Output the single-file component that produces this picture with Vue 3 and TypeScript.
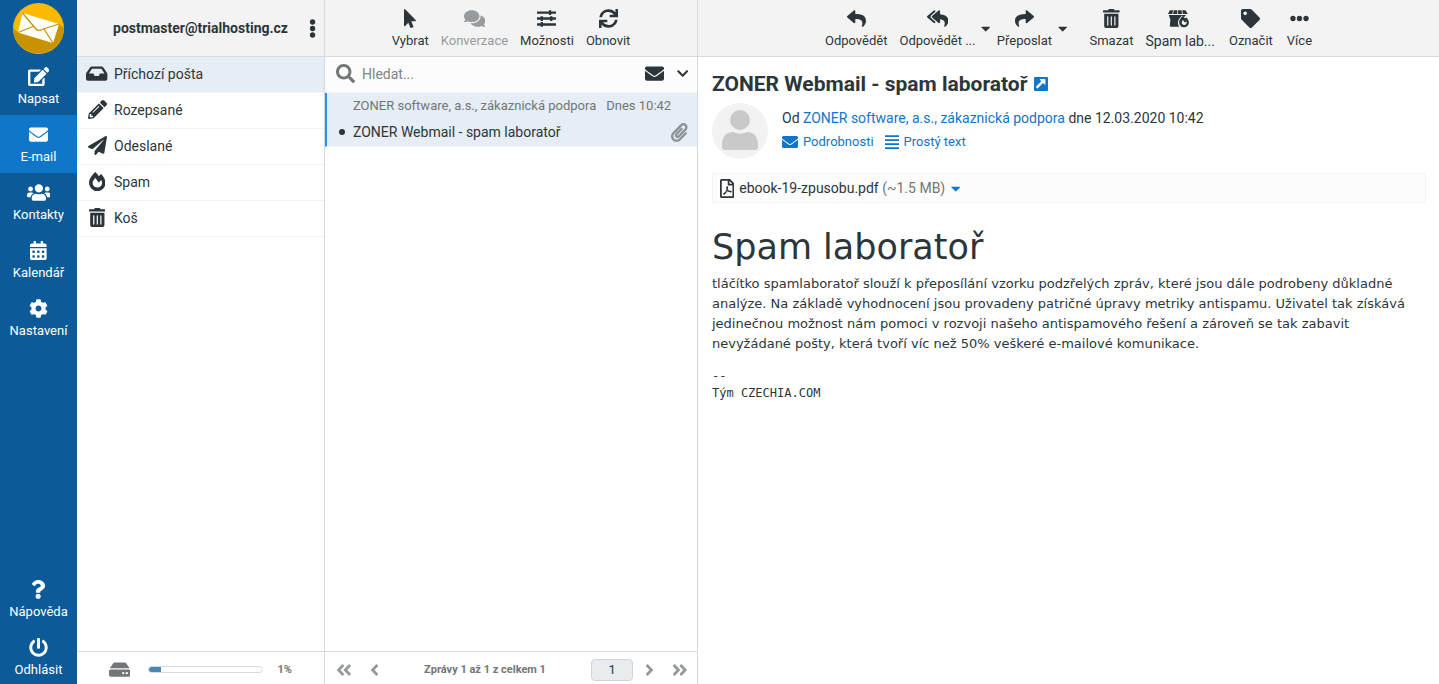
<script setup lang="ts">
import { h, ref } from 'vue'

interface Glyph { w: number; d: string }

const dot = (x: number, y: number, r: number) => `M${x - r} ${y}a${r} ${r} 0 1 0 ${2 * r} 0a${r} ${r} 0 1 0 ${-2 * r} 0z`
const cell = (x: number, y: number) => `M${x} ${y}c0-6.600 5.400-12 12-12h40c6.600 0 12 5.400 12 12v40c0 6.600-5.400 12-12 12h-40c-6.600 0-12-5.400-12-12z`
const angleLeft = (x: number) => `M${x} 239l136-136c9.400-9.400 24.600-9.400 33.900 0l22.600 22.600c9.400 9.400 9.400 24.600 0 33.900L${x + 96.2} 256l96.400 96.400c9.400 9.400 9.400 24.600 0 33.900L${x + 170} 409c-9.400 9.400-24.600 9.400-33.900 0l-136-136c-9.500-9.400-9.500-24.600-.1-34z`
const angleRight = (x: number) => `M${x} 273l-136 136c-9.400 9.400-24.600 9.400-33.900 0l-22.600-22.600c-9.400-9.400-9.400-24.600 0-33.900L${x - 96.2} 256l-96.400-96.400c-9.400-9.400-9.400-24.600 0-33.900L${x - 170} 103c9.400-9.400 24.600-9.400 33.900 0l136 136c9.500 9.400 9.500 24.600.1 34z`

const glyphs: Record<string, Glyph> = {
  edit: { w: 576, d: 'M402.600 83.200l90.200 90.200c3.800 3.800 3.800 10 0 13.800L274.400 405.600l-92.800 10.300c-12.400 1.400-22.900-9.100-21.500-21.500l10.300-92.800L388.800 83.200c3.800-3.800 10-3.800 13.800 0zm162-22.900l-48.800-48.800c-15.200-15.200-39.900-15.200-55.200 0l-35.400 35.400c-3.800 3.800-3.800 10 0 13.800l90.200 90.200c3.800 3.800 10 3.800 13.800 0l35.400-35.400c15.200-15.300 15.200-40 0-55.200zM384 346.200V448H64V128h229.800c3.200 0 6.200-1.300 8.500-3.500l40-40c7.600-7.600 2.200-20.500-8.500-20.500H48C21.500 64 0 85.500 0 112v352c0 26.500 21.500 48 48 48h352c26.500 0 48-21.500 48-48V306.200c0-10.700-12.900-16-20.500-8.500l-40 40c-2.200 2.300-3.500 5.300-3.500 8.500z' },
  envelope: { w: 512, d: 'M502.300 190.800c3.900-3.100 9.700-.2 9.700 4.700V400c0 26.500-21.500 48-48 48H48c-26.500 0-48-21.500-48-48V195.600c0-5 5.700-7.800 9.700-4.700 22.400 17.400 52.100 39.500 154.100 113.600 21.100 15.400 56.700 47.800 92.200 47.600 35.700.3 72-32.800 92.300-47.600 102-74.100 131.600-96.300 154-113.700zM256 320c23.200.4 56.600-29.200 73.400-41.400 132.700-96.300 142.800-104.700 173.400-128.700 5.800-4.500 9.200-11.500 9.200-18.900v-19c0-26.500-21.500-48-48-48H48c-26.500 0-48 21.500-48 48v19c0 7.400 3.400 14.300 9.200 18.900 30.600 23.900 40.700 32.400 173.400 128.700 16.800 12.200 50.200 41.800 73.400 41.400z' },
  users: { w: 640, d: 'M96 224c35.300 0 64-28.700 64-64s-28.700-64-64-64-64 28.700-64 64 28.700 64 64 64zm448 0c35.300 0 64-28.700 64-64s-28.700-64-64-64-64 28.700-64 64 28.700 64 64 64zm32 32h-64c-17.600 0-33.500 7.100-45.100 18.600 40.300 22.100 68.900 62 75.100 109.400h66c17.700 0 32-14.300 32-32v-32c0-35.300-28.700-64-64-64zm-256 0c61.900 0 112-50.100 112-112S381.900 32 320 32 208 82.100 208 144s50.100 112 112 112zm76.800 32h-8.300c-20.800 10-43.900 16-68.500 16s-47.600-6-68.500-16h-8.300C179.600 288 128 339.600 128 403.200V432c0 26.500 21.500 48 48 48h288c26.500 0 48-21.500 48-48v-28.800c0-63.600-51.600-115.200-115.200-115.200zm-223.700-13.400C161.500 263.100 145.600 256 128 256H64c-35.300 0-64 28.700-64 64v32c0 17.700 14.300 32 32 32h65.900c6.300-47.400 34.900-87.300 75.200-109.400z' },
  calendar: { w: 448, d: 'M0 464c0 26.500 21.500 48 48 48h352c26.500 0 48-21.500 48-48V192H0z' + [268, 396].map(y => [64, 192, 320].map(x => cell(x, y)).join('')).join('') + 'M400 64h-48V16c0-8.800-7.200-16-16-16h-32c-8.800 0-16 7.200-16 16v48H160V16c0-8.800-7.200-16-16-16h-32c-8.800 0-16 7.200-16 16v48H48C21.500 64 0 85.500 0 112v48h448v-48c0-26.500-21.500-48-48-48z' },
  cog: { w: 512, d: 'M487.400 315.700l-42.600-24.600c4.300-23.200 4.300-47 0-70.200l42.600-24.600c4.900-2.800 7.100-8.600 5.500-14-11.100-35.600-30-67.800-54.700-94.600-3.800-4.100-10-5.100-14.800-2.300L380.800 110c-17.900-15.400-38.500-27.300-60.800-35.100V25.800c0-5.600-3.900-10.500-9.400-11.700-36.700-8.200-74.300-7.800-109.200 0-5.500 1.200-9.400 6.100-9.400 11.700V75c-22.200 7.900-42.800 19.800-60.800 35.100L88.700 85.500c-4.900-2.800-11-1.900-14.800 2.300-24.700 26.700-43.600 58.900-54.700 94.600-1.700 5.400.6 11.200 5.500 14L67.300 221c-4.300 23.200-4.300 47 0 70.200l-42.600 24.600c-4.900 2.800-7.100 8.600-5.500 14 11.100 35.600 30 67.800 54.700 94.600 3.800 4.100 10 5.100 14.800 2.300l42.600-24.600c17.900 15.400 38.500 27.300 60.800 35.100v49.200c0 5.600 3.900 10.500 9.400 11.700 36.700 8.200 74.300 7.800 109.200 0 5.500-1.200 9.400-6.100 9.400-11.700v-49.200c22.200-7.900 42.800-19.800 60.800-35.100l42.600 24.600c4.900 2.800 11 1.900 14.800-2.300 24.700-26.700 43.600-58.900 54.700-94.600 1.500-5.500-.7-11.300-5.600-14.100zM256 336c-44.100 0-80-35.900-80-80s35.900-80 80-80 80 35.900 80 80-35.900 80-80 80z' },
  question: { w: 384, d: 'M202 0C122.200 0 70.500 32.700 29.900 91c-7.400 10.600-5.100 25.100 5.200 32.900l43.100 32.700c10.400 7.900 25.100 6 33.300-4.100 25-31.400 43.600-49.500 82.700-49.500 30.800 0 68.800 19.800 68.800 49.600 0 22.600-18.600 34.200-49 51.200-35.400 19.900-82.300 44.600-82.300 106.400V320c0 13.300 10.700 24 24 24h72.500c13.300 0 24-10.700 24-24v-5.800c0-42.900 125.300-44.600 125.300-160.600C377.500 66.300 286.900 0 202 0zM192 373.500c-38.200 0-69.300 31-69.300 69.200S153.800 512 192 512s69.300-31.100 69.300-69.300-31.100-69.200-69.300-69.200z' },
  power: { w: 512, d: 'M400 54.100c63 45 104 118.600 104 201.900 0 136.800-110.800 247.700-247.500 248C120 504.300 8.200 393 8 256.400 7.900 173.100 48.900 99.300 111.800 54.200c11.700-8.300 28-4.800 35 7.700L162.600 90c5.900 10.500 3.100 23.800-6.600 31-41.500 30.800-68 79.600-68 134.900-.1 92.300 74.500 168.100 168 168.100 91.600 0 168.600-74.200 168-169.100-.3-51.800-24.700-101.800-68.100-134-9.700-7.200-12.400-20.500-6.500-30.900l15.800-28.100c7-12.400 23.200-16.100 34.800-7.800zM296 264V24c0-13.300-10.700-24-24-24h-32c-13.300 0-24 10.700-24 24v240c0 13.300 10.700 24 24 24h32c13.300 0 24-10.700 24-24z' },
  inbox: { w: 576, d: 'M567.900 243.900L462.300 85.400A48 48 0 0 0 422.300 64H153.700a48 48 0 0 0-39.900 21.400L8.100 243.900A48 48 0 0 0 0 270.500V400c0 26.500 21.500 48 48 48h480c26.500 0 48-21.500 48-48V270.500a48 48 0 0 0-8.100-26.600zM162.300 128h251.400l85.400 128H376l-32 64H232l-32-64H76.900z' },
  pencil: { w: 512, d: 'M497.900 142.100l-46.100 46.100c-4.700 4.700-12.300 4.700-17 0l-111-111c-4.700-4.700-4.700-12.300 0-17l46.100-46.100c18.700-18.700 49.100-18.700 67.900 0l60.100 60.100c18.800 18.700 18.800 49.100 0 67.900zM284.200 99.800L21.600 362.400.4 483.900c-2.900 16.400 11.400 30.600 27.800 27.800l121.500-21.300 262.600-262.600c4.700-4.700 4.700-12.300 0-17l-111-111c-4.800-4.700-12.400-4.700-17.100 0zM124.100 339.900c-5.500-5.500-5.500-14.300 0-19.800l154-154c5.500-5.500 14.300-5.500 19.800 0s5.500 14.300 0 19.800l-154 154c-5.500 5.500-14.300 5.500-19.800 0zM88 424h48v36.300l-64.500 11.300-31.100-31.100L51.700 376H88z' },
  plane: { w: 512, d: 'M476 3.200L12.500 270.600c-18.100 10.400-15.800 35.600 2.200 43.200L121 358.400l287.300-253.200c5.500-4.900 13.300 2.600 8.600 8.300L176 407v80.500c0 23.600 28.500 32.900 42.500 15.800L282 426l124.600 52.200c14.200 6 30.400-2.900 33-18.200l72-432C515 7.800 493.300-6.800 476 3.200z' },
  fire: { w: 448, d: 'M323.600 51.200c-20.800 19.300-39.600 39.600-56.300 60C240.100 73.600 206.300 35.500 168 0 69.700 91.200 0 210 0 281.600 0 408.900 100.300 512 224 512s224-103.100 224-230.400c0-53.300-52-163.100-124.400-230.400zm-19.500 340.700C282.400 407 255.700 416 226.900 416 154.700 416 96 368.300 96 290.800c0-38.700 24.300-72.700 72.800-130.800 6.900 8 98.800 125.300 98.800 125.300l58.700-66.800c4.100 6.800 7.900 13.500 11.200 20 27.400 52.100 15.900 118.900-33.400 153.400z' },
  trash: { w: 448, d: 'M32 464a48 48 0 0 0 48 48h288a48 48 0 0 0 48-48V128H32zm272-256a16 16 0 0 1 32 0v224a16 16 0 0 1-32 0zm-96 0a16 16 0 0 1 32 0v224a16 16 0 0 1-32 0zm-96 0a16 16 0 0 1 32 0v224a16 16 0 0 1-32 0zM432 32H312l-9.400-18.700A24 24 0 0 0 281.100 0H166.800a23.700 23.700 0 0 0-21.400 13.300L136 32H16A16 16 0 0 0 0 48v32a16 16 0 0 0 16 16h416a16 16 0 0 0 16-16V48a16 16 0 0 0-16-16z' },
  pointer: { w: 320, d: 'M302.200 329.100H196.100l55.800 136c3.900 9.400-.5 20-9.400 24l-49.200 21.400c-9.100 4-19.400-.5-23.300-9.700l-53-129.100-86.700 89.100C18.700 472.700 0 463.600 0 448V18.300C0 1.900 19.900-6.100 30.300 5.400L314.700 298c11.500 11.200 3 31.100-12.500 31.100z' },
  comments: { w: 576, d: 'M416 192c0-88.400-93.100-160-208-160S0 103.600 0 192c0 34.300 14.100 65.900 38 92-13.400 30.200-35.500 54.200-35.800 54.500-2.200 2.300-2.800 5.700-1.500 8.700S4.800 352 8 352c36.600 0 66.900-12.300 88.700-25 32.200 15.700 70.300 25 111.300 25 114.900 0 208-71.600 208-160zm122 220c23.900-26 38-57.700 38-92 0-66.900-53.500-124.200-129.300-148.100.9 6.600 1.300 13.300 1.300 20.100 0 105.900-107.700 192-240 192-10.800 0-21.300-.8-31.700-1.900C207.800 439.600 281.800 480 368 480c41 0 79.100-9.200 111.300-25 21.800 12.700 52.100 25 88.700 25 3.200 0 6.100-1.900 7.300-4.800 1.300-2.900.7-6.300-1.500-8.700-.3-.3-22.400-24.200-35.800-54.500z' },
  sliders: { w: 512, d: 'M0 64h320V40q0-8 8-8h48q8 0 8 8v24h128v64H384v24q0 8-8 8h-48q-8 0-8-8v-24H0zM0 224h96v-24q0-8 8-8h48q8 0 8 8v24h192v-24q0-8 8-8h48q8 0 8 8v24h96v64h-96v24q0 8-8 8h-48q-8 0-8-8v-24H160v24q0 8-8 8h-48q-8 0-8-8v-24H0zM0 384h96v-24q0-8 8-8h48q8 0 8 8v24h352v64H160v24q0 8-8 8h-48q-8 0-8-8v-24H0z' },
  sync: { w: 512, d: 'M440.700 12.600l4 82.700A247.200 247.200 0 0 0 255.800 8C134.700 8 33.900 94.900 12.300 209.800A12 12 0 0 0 24.100 224h49a12 12 0 0 0 11.700-9.300 175.900 175.900 0 0 1 317-56.900l-101.500-4.900a12 12 0 0 0-12.500 12v47.400a12 12 0 0 0 12 12H500a12 12 0 0 0 12-12V12a12 12 0 0 0-12-12h-47.400a12 12 0 0 0-11.900 12.600zM255.800 432a175.600 175.600 0 0 1-146-77.800l101.800 4.900a12 12 0 0 0 12.600-12v-47.400a12 12 0 0 0-12-12H12a12 12 0 0 0-12 12V500a12 12 0 0 0 12 12h47.400a12 12 0 0 0 12-12.600l-4.200-82.600A247.200 247.200 0 0 0 255.800 504c121.100 0 222-86.900 243.600-201.800a12 12 0 0 0-11.800-14.200h-49.100a12 12 0 0 0-11.600 9.300A175.900 175.900 0 0 1 255.800 432z' },
  search: { w: 512, d: 'M505 442.700L405.300 343c-4.500-4.500-10.600-7-17-7H372c27.600-35.300 44-79.700 44-128C416 93.100 322.900 0 208 0S0 93.100 0 208s93.100 208 208 208c48.300 0 92.700-16.400 128-44v16.300c0 6.400 2.500 12.500 7 17l99.700 99.700c9.400 9.400 24.600 9.400 33.900 0l28.300-28.300c9.400-9.400 9.400-24.600.1-34zM208 336c-70.700 0-128-57.200-128-128 0-70.700 57.200-128 128-128 70.700 0 128 57.200 128 128 0 70.700-57.200 128-128 128z' },
  reply: { w: 512, d: 'M8.300 189.800l176-151.900C199.700 24.500 224 35.300 224 56v80.100c160.600 1.800 288 34 288 186.200 0 61.500-39.600 122.300-83.300 154.200-13.700 9.900-33.100-2.600-28.100-18.700 45.300-145-21.500-183.500-176.600-185.700V360c0 20.700-24.300 31.500-39.700 18.200l-176-152c-11.100-9.600-11.100-26.800 0-36.400z' },
  replyAll: { w: 576, d: 'M136.300 189.800l176-151.900C327.700 24.500 352 35.300 352 56v82.800c129.200 10.200 224 52.200 224 183.500 0 61.500-39.600 122.300-83.300 154.200-13.700 9.900-33.100-2.600-28.100-18.700 38.500-123.100-3.900-169.500-112.600-182V360c0 20.700-24.300 31.400-39.700 18.100l-176-151.900c-11.100-9.600-11.100-26.800 0-36.400zm-128 36.400l176 152C199.700 391.400 224 380.700 224 360v-15.800l-108.600-93.800A56 56 0 0 1 96 208a56 56 0 0 1 19.400-42.400L224 71.800V56c0-20.700-24.300-31.500-39.700-18.100l-176 151.900c-11.100 9.600-11.100 26.800 0 36.400z' },
  forward: { w: 512, d: 'M503.700 189.800l-176-151.900C312.300 24.500 288 35.300 288 56v80.100C127.400 137.900 0 170.100 0 322.300c0 61.500 39.600 122.300 83.300 154.200 13.700 9.900 33.100-2.600 28.100-18.700C66.100 312.800 132.900 274.300 288 272.100V360c0 20.700 24.300 31.500 39.700 18.200l176-152c11.100-9.600 11.100-26.800 0-36.400z' },
  lab: { w: 640, d: 'M48 32h90l-22 104H0zM156 32h92v104H136zM268 32h92l20 104H268zM380 32h92l64 104H402zM22 160h470c-24 18-42 38-58 60-22-20-36-30-58-44-62 56-108 130-108 192 0 44 16 82 42 112H82q-30 0-32-30L64 288zM488 222c-12 12-20 22-30 34-20-24-40-44-64-66-58 54-94 124-94 166 0 74 58 136 132 136s132-60 132-136c0-30-30-94-76-134zM476 416c-50 36-108 0-108-54 0-22 14-42 34-66l58 72 34-38c22 30 10 68-18 86z' },
  tag: { w: 512, d: 'M0 252.100V48C0 21.500 21.500 0 48 0h204.100a48 48 0 0 1 34 14.100l211.800 211.800c18.800 18.800 18.800 49.200 0 67.900L293.800 497.900c-18.700 18.800-49.100 18.800-67.900 0L14.100 286.100A48 48 0 0 1 0 252.100zM112 64c-26.500 0-48 21.500-48 48s21.500 48 48 48 48-21.500 48-48-21.500-48-48-48z' },
  more: { w: 512, d: dot(80, 256, 72) + dot(256, 256, 72) + dot(432, 256, 72) },
  kebab: { w: 192, d: dot(96, 80, 72) + dot(96, 256, 72) + dot(96, 432, 72) },
  clip: { w: 448, d: 'M43.200 466.100c-58.400-60.200-57.300-157.500 1.400-217.500L254.400 34c44.300-45.300 116.400-45.300 160.700 0 43.900 44.900 43.900 117.300 0 162.300L232.200 383.100c-29.800 30.600-78.600 30.100-108-1-28.200-29.900-27.300-77.400 1.500-106.900l143.700-146.900c6.200-6.300 16.300-6.400 22.700-.2l22.800 22.400c6.300 6.100 6.400 16.300.3 22.600L171.400 319.900c-4.900 5.100-5.200 13.500-.6 18.300 4.400 4.700 11.200 4.800 15.700.2l182.800-186.900c19.600-20 19.600-52.700 0-72.800-19.200-19.600-50-19.600-69.200 0L90.400 293.300c-34.800 35.600-35.300 93.100-1.200 128.300 34 35.100 89 35.100 123.100.3l172-176c6.200-6.300 16.300-6.400 22.700-.3l22.800 22.400c6.400 6.200 6.500 16.300.3 22.600l-172.100 176c-59.500 61-155.900 60.300-214.800-.5z' },
  disk: { w: 576, d: 'M576 304v96c0 26.500-21.500 48-48 48H48c-26.500 0-48-21.500-48-48v-96c0-26.500 21.500-48 48-48h480c26.500 0 48 21.500 48 48zm-48-80a79.600 79.600 0 0 1 30.800 6.200L462.300 85.400A48 48 0 0 0 422.300 64H153.700a48 48 0 0 0-39.900 21.400L17.200 230.200A79.600 79.600 0 0 1 48 224z' + dot(480, 352, 32) + dot(384, 352, 32) },
  down: { w: 448, d: 'M207 381.500L12.700 187.100c-9.400-9.400-9.400-24.600 0-33.900l22.600-22.700c9.400-9.400 24.500-9.400 33.900 0L224 284.500l154.700-154c9.400-9.300 24.600-9.300 33.900 0l22.700 22.700c9.400 9.400 9.400 24.600 0 33.900L241 381.500c-9.400 9.300-24.600 9.300-34 0z' },
  left: { w: 256, d: angleLeft(31.7) },
  right: { w: 256, d: angleRight(224.3) },
  first: { w: 448, d: angleLeft(31.7) + angleLeft(223.7) },
  last: { w: 448, d: angleRight(416.3) + angleRight(224.3) },
  caret: { w: 320, d: 'M31 192h258c18 0 27 22 14 34L174 354q-14 12-28 0L17 226c-13-12-4-34 14-34z' },
  lines: { w: 448, d: 'M0 36h448v56H0zM0 164h448v56H0zM0 292h448v56H0zM0 420h448v56H0z' },
  external: { w: 448, d: 'M32 32h384q32 0 32 32v384q0 32-32 32H32q-32 0-32-32V64q0-32 32-32zM200 96q-24 6-10 28l44 44L66 336q-12 12 0 24l32 32q12 12 24 0l168-168 44 44q22 16 32-8V120q0-24-24-24z' },
  pdf: { w: 384, d: 'M369.900 97.900L286 14C277 5 264.800-.1 252.100-.1H48C21.500 0 0 21.500 0 48v416c0 26.500 21.500 48 48 48h288c26.500 0 48-21.500 48-48V131.900c0-12.700-5.100-25-14.100-34zM332.100 128H256V51.900zM48 464V48h160v104c0 13.300 10.700 24 24 24h104v288zM178 202c20-20 46 0 40 28-2 18-6 34-8 42 12 22 24 34 38 46 40-6 72-2 68 24-8 30-44 18-78 2-24 2-48 8-70 18-26 44-54 78-78 60-22-22 14-52 46-66 16-28 30-60 38-88-8-26-10-54 4-66zM192 304c-6 14-12 26-18 38 16-6 28-8 42-12-10-8-18-16-24-26z' },
}

const Icon = (props: { name: string }) => {
  const g = glyphs[props.name]
  return h('svg', { class: 'icon', viewBox: `0 0 ${g.w} 512`, 'aria-hidden': 'true' }, [
    h('path', { d: g.d, fill: 'currentColor', 'fill-rule': 'evenodd' }),
  ])
}
Icon.props = ['name']

const tasks = [
  { icon: 'edit', label: 'Napsat' },
  { icon: 'envelope', label: 'E-mail', active: true },
  { icon: 'users', label: 'Kontakty' },
  { icon: 'calendar', label: 'Kalendář' },
  { icon: 'cog', label: 'Nastavení' },
]
const system = [
  { icon: 'question', label: 'Nápověda' },
  { icon: 'power', label: 'Odhlásit' },
]
const folders = [
  { icon: 'inbox', label: 'Příchozí pošta' },
  { icon: 'pencil', label: 'Rozepsané' },
  { icon: 'plane', label: 'Odeslané' },
  { icon: 'fire', label: 'Spam' },
  { icon: 'trash', label: 'Koš' },
]
const listTools = [
  { icon: 'pointer', label: 'Vybrat' },
  { icon: 'comments', label: 'Konverzace', disabled: true },
  { icon: 'sliders', label: 'Možnosti' },
  { icon: 'sync', label: 'Obnovit' },
]
const mailTools = [
  { icon: 'reply', label: 'Odpovědět' },
  { icon: 'replyAll', label: 'Odpovědět ...', menu: true },
  { icon: 'forward', label: 'Přeposlat', menu: true },
  { icon: 'trash', label: 'Smazat', spaced: true },
  { icon: 'lab', label: 'Spam lab...', large: true },
  { icon: 'tag', label: 'Označit' },
  { icon: 'more', label: 'Více' },
]

const folder = ref('Příchozí pošta')
const query = ref('')
const page = ref('1')
const quota = 1
</script>

<template>
  <div class="app">
    <nav class="taskbar" aria-label="Hlavní nabídka">
      <svg class="logo" viewBox="0 0 51 51" aria-hidden="true">
        <circle cx="25.500" cy="25.500" r="25.500" fill="#fbba00" />
        <path d="M0 25L5 29.500 40 40 46 21 51 25A25.500 25.500 0 0 1 0 25z" fill="#c79400" />
        <path d="M9.500 10L46 21 40 40 5 29.500z" fill="#fff" />
        <path d="M9.500 10L22.500 25.500Q25 28.500 29 26.500L46 21M5 29.500L20 23.500M40 40L31 26" fill="none" stroke="#c79400" stroke-width="1.300" />
      </svg>
      <a v-for="t in tasks" :key="t.label" href="#" class="task" :class="{ active: t.active }">
        <Icon :name="t.icon" /><span>{{ t.label }}</span>
      </a>
      <div class="grow"></div>
      <a v-for="t in system" :key="t.label" href="#" class="task">
        <Icon :name="t.icon" /><span>{{ t.label }}</span>
      </a>
    </nav>

    <aside class="folders">
      <header class="bar account">
        <span class="user">postmaster@trialhosting.cz</span>
        <button class="plain" type="button" aria-label="Akce složek"><Icon name="kebab" /></button>
      </header>
      <ul class="folder-list">
        <li v-for="f in folders" :key="f.label">
          <a href="#" class="folder" :class="{ selected: folder === f.label }" @click.prevent="folder = f.label">
            <span class="slot"><Icon :name="f.icon" /></span>{{ f.label }}
          </a>
        </li>
      </ul>
      <footer class="foot quota">
        <Icon name="disk" />
        <div class="meter"><div class="fill" :style="{ width: Math.max(quota, 10) + '%' }"></div></div>
        <span>{{ quota }}%</span>
      </footer>
    </aside>

    <section class="messages">
      <header class="bar tools">
        <button v-for="t in listTools" :key="t.label" type="button" class="tool" :disabled="t.disabled">
          <Icon :name="t.icon" /><span>{{ t.label }}</span>
        </button>
      </header>
      <form class="search" @submit.prevent>
        <label for="query" aria-label="Hledat"><Icon name="search" /></label>
        <input id="query" v-model="query" type="text" placeholder="Hledat..." />
        <button class="plain" type="button" aria-label="Nepřečtené"><Icon name="envelope" /></button>
        <button class="plain small" type="button" aria-label="Možnosti hledání"><Icon name="down" /></button>
      </form>
      <ul class="message-list">
        <li>
          <a href="#" class="message">
            <span class="meta"><span>ZONER software, a.s., zákaznická podpora</span><span>Dnes 10:42</span></span>
            <span class="subject"><i class="bullet"></i><span class="title">ZONER Webmail - spam laboratoř</span><Icon name="clip" /></span>
          </a>
        </li>
      </ul>
      <footer class="foot pager">
        <button class="plain" type="button" aria-label="První"><Icon name="first" /></button>
        <button class="plain" type="button" aria-label="Předchozí"><Icon name="left" /></button>
        <span class="count">Zprávy 1 až 1 z celkem 1</span>
        <input v-model="page" type="text" aria-label="Stránka" />
        <button class="plain" type="button" aria-label="Další"><Icon name="right" /></button>
        <button class="plain" type="button" aria-label="Poslední"><Icon name="last" /></button>
      </footer>
    </section>

    <main class="reader">
      <header class="bar tools mail-tools">
        <div v-for="t in mailTools" :key="t.label" class="group" :class="{ spaced: t.spaced }">
          <button type="button" class="tool" :class="{ large: t.large }">
            <Icon :name="t.icon" /><span>{{ t.label }}</span>
          </button>
          <button v-if="t.menu" type="button" class="plain drop" :aria-label="t.label + ' – nabídka'"><Icon name="caret" /></button>
        </div>
      </header>
      <article class="mail">
        <h2>ZONER Webmail - spam laboratoř <a href="#" aria-label="Otevřít v novém okně"><Icon name="external" /></a></h2>
        <div class="sender">
          <svg class="avatar" viewBox="0 0 56 56" aria-hidden="true">
            <circle cx="28" cy="28" r="28" fill="#f2f2f2" />
            <circle cx="28" cy="17" r="10" fill="#c9c9c9" />
            <path d="M10 42C10 34 14 29 21 29C25 31 31 31 35 29C42 29 46 34 46 42V44Q46 47 43 47H13Q10 47 10 44z" fill="#c9c9c9" />
          </svg>
          <div>
            <p class="from">Od <a href="#">ZONER software, a.s., zákaznická podpora</a> dne 12.03.2020 10:42</p>
            <p class="links">
              <a href="#"><Icon name="envelope" />Podrobnosti</a>
              <a href="#"><Icon name="lines" />Prostý text</a>
            </p>
          </div>
        </div>
        <div class="attachment">
          <Icon name="pdf" />
          <a href="#">ebook-19-zpusobu.pdf <span>(~1.5 MB)</span></a>
          <button class="plain" type="button" aria-label="Možnosti přílohy"><Icon name="caret" /></button>
        </div>
        <div class="body">
          <h1>Spam laboratoř</h1>
          <p>tláčítko spamlaboratoř slouží k přeposílání vzorku podzřelých zpráv, které jsou dále podrobeny důkladné analýze. Na základě vyhodnocení jsou provadeny patričné úpravy metriky antispamu. Uživatel tak získává jedinečnou možnost nám pomoci v rozvoji našeho antispamového řešení a zároveň se tak zabavit nevyžádané pošty, která tvoří víc než 50% veškeré e-mailové komunikace.</p>
          <div class="signature">--<br />Tým CZECHIA.COM</div>
        </div>
      </article>
    </main>
  </div>
</template>

<style>
body { margin: 0; }
</style>

<style scoped>
* { box-sizing: border-box; }
.app {
  display: flex;
  height: 100vh;
  font: 14px/20px Roboto, "Liberation Sans", sans-serif;
  color: #2c363a;
  background: #fff;
}
a { color: #0f76c9; text-decoration: none; }
ul, p, h1, h2 { margin: 0; padding: 0; list-style: none; }
button, input { font: inherit; color: inherit; }
.icon { display: block; flex: none; height: 19px; }
.plain { display: flex; padding: 0; border: 0; background: none; cursor: pointer; }
.grow { flex: 1; }

.taskbar { display: flex; flex-direction: column; flex: none; width: 77px; background: #0c5a98; }
.logo { flex: none; width: 51px; height: 51px; margin: 3px auto; }
.task {
  display: flex;
  flex-direction: column;
  align-items: center;
  gap: 4px;
  height: 58px;
  padding-top: 10px;
  font-size: 13px;
  line-height: 18px;
  color: #fff;
}
.task.active { background: #1076c8; }
.task:last-child { height: 56px; }

.folders, .messages { display: flex; flex-direction: column; flex: none; border-right: 1px solid #d4dbde; }
.folders { width: 248px; }
.messages { width: 373px; }
.reader { display: flex; flex-direction: column; flex: 1; min-width: 0; }

.bar { display: flex; flex: none; height: 57px; background: #f3f3f3; border-bottom: 1px solid #d4dbde; }
.account { align-items: center; padding: 0 8px 0 36px; }
.user { flex: 1; font-weight: 700; }
.folder {
  display: flex;
  align-items: center;
  gap: 6px;
  height: 36px;
  padding: 0 0 2px 9px;
  color: #2c363a;
  border-bottom: 1px solid #f1f3f4;
}
.folder.selected { background: #e6edf4; }
.slot { display: flex; justify-content: center; width: 22px; }
.folder-list, .message-list { flex: 1; }

.foot { display: flex; align-items: center; flex: none; height: 33px; padding-top: 3px; border-top: 1px solid #d4dbde; font-size: 11px; font-weight: 700; color: #737677; }
.quota { gap: 14px; padding-left: 32px; }
.quota .icon { margin-right: 4px; }
.meter { width: 115px; height: 7px; border: 1px solid #d4dbde; border-radius: 4px; overflow: hidden; }
.fill { height: 100%; background: #4a86b8; }

.tools { justify-content: center; }
.tool {
  display: flex;
  flex-direction: column;
  align-items: center;
  gap: 4px;
  padding: 9px 6px 0;
  border: 0;
  background: none;
  font-size: 13px;
  line-height: 18px;
}
.tool:disabled { color: #979b9d; }
.tool.large { font-size: 14px; }
.group { display: flex; }
.spaced { margin-left: 16px; }
.drop { align-items: center; }
.drop .icon { height: 15px; }
.mail-tools .large { margin-right: 2px; }
.group:last-child { margin-left: 2px; }

.search { display: flex; align-items: center; height: 36px; padding: 0 9px 2px 11px; background: #fcfcfc; border-bottom: 1px solid #f1f3f4; }
.search label { color: #737677; }
.search input { flex: 1; min-width: 0; margin-left: 5px; padding: 0 2px; border: 0; outline: 0; background: none; }
.search input::placeholder { color: #808487; opacity: 1; }
.small { margin-left: 13px; }
.small .icon { height: 13px; }

.message { display: block; height: 54px; padding: 3px 9px 0 26px; border-left: 2px solid #2592e6; border-bottom: 1px solid #f1f3f4; background: #e6edf4; color: #2c363a; }
.meta { display: flex; gap: 10px; font-size: 13px; color: #737677; }
.subject { display: flex; align-items: center; height: 32px; margin-left: -14px; }
.bullet { width: 6px; height: 6px; margin-right: 8px; border-radius: 50%; background: #2c363a; }
.title { flex: 1; }
.subject .icon { color: #8d9499; }

.pager { padding-left: 11px; padding-right: 9px; }
.pager .icon { height: 18px; color: #96999b; }
.pager .plain + .plain { margin-left: 18px; }
.count { flex: 1; text-align: center; }
.pager input { width: 42px; height: 22px; margin-right: 12px; padding: 0; border: 1px solid #ced4da; border-radius: 4px; background: #e9ecef; font-size: 13px; font-weight: 400; text-align: center; color: #2c363a; }

.mail { padding: 14px 13px 14px 14px; }
.mail h2 { display: flex; align-items: center; gap: 7px; font-size: 21px; line-height: 26px; }
.mail h2 .icon { height: 16px; }
.sender { display: flex; gap: 14px; margin-top: 6px; }
.avatar { width: 56px; height: 56px; }
.from { margin-top: 5px; }
.links { display: flex; gap: 11px; margin-top: 4px; font-size: 13px; }
.links a { display: flex; align-items: center; gap: 5px; }
.links .icon { height: 16px; }
.attachment { display: flex; align-items: center; height: 30px; margin-top: 14px; padding: 0 7px; border: 1px solid #f1f3f4; background: #fcfcfc; }
.attachment > a { margin: 0 6px 0 5px; color: #2c363a; }
.attachment a span { color: #737677; }
.attachment .plain { color: #0f76c9; }
.attachment .plain .icon { height: 15px; }
.body { margin-top: 22px; font: 13px/20px Verdana, "DejaVu Sans", sans-serif; }
.body h1 { font-size: 35px; font-weight: 400; line-height: 44px; margin-bottom: 5px; }
.signature { margin-top: 14px; font: 12px/17px "DejaVu Sans Mono", monospace; }
</style>
